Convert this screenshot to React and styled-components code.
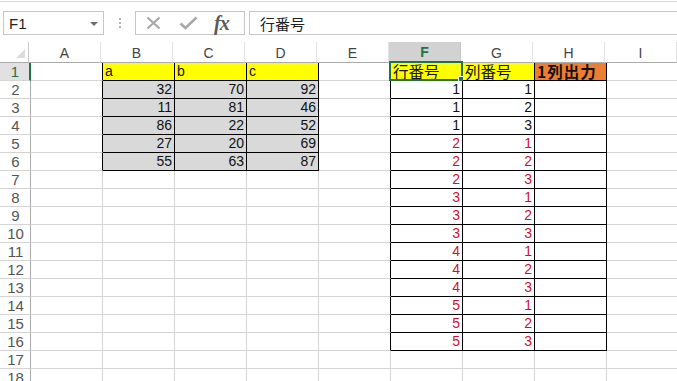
import React from 'react';
import styled, { createGlobalStyle } from 'styled-components';

const GlobalStyle = createGlobalStyle`
  html, body {
    margin: 0;
    padding: 0;
    background: #ffffff;
  }
  body {
    font-family: "Liberation Sans", "Noto Sans CJK JP", sans-serif;
  }
`;

const gridLine = '#d4d4d4';
const green = '#217346';

const Sheet = styled.div`
  width: 677px;
  height: 381px;
  overflow: hidden;
  background: #ffffff;
  display: flex;
  flex-direction: column;
`;

const TopLine = styled.div`
  height: 1px;
  margin-top: 1px;
  background: #d6d6d6;
  flex: none;
`;

const FormulaBar = styled.div`
  display: flex;
  align-items: stretch;
  height: 24px;
  margin: 9px 0 7px 3px;
  flex: none;
`;

const NameBox = styled.div`
  box-sizing: border-box;
  width: 101px;
  border: 1px solid #c6c6c6;
  display: flex;
  align-items: center;
  justify-content: space-between;
  padding: 0 5px 0 5px;
  font-size: 15px;
  color: #222;
`;

const DropArrow = styled.span`
  width: 0;
  height: 0;
  border-left: 4px solid transparent;
  border-right: 4px solid transparent;
  border-top: 4px solid #6d6d6d;
  margin-top: 1px;
`;

const Dots = styled.div`
  width: 31px;
  display: flex;
  flex-direction: column;
  align-items: center;
  justify-content: center;
  gap: 2px;
  span {
    width: 2px;
    height: 2px;
    background: #b4b4b4;
  }
`;

const FxBox = styled.div`
  box-sizing: border-box;
  width: 110px;
  border: 1px solid #c6c6c6;
  display: flex;
  align-items: center;
  padding-left: 10px;
  gap: 18px;
`;

const Fx = styled.span`
  font-family: "Liberation Serif", serif;
  font-style: italic;
  font-weight: bold;
  font-size: 20px;
  color: #5a5a5a;
  margin-left: -2px;
  letter-spacing: -1px;
`;

const FormulaInput = styled.div`
  box-sizing: border-box;
  flex: 1;
  margin-left: 4px;
  margin-right: -4px;
  border: 1px solid #c6c6c6;
  display: flex;
  align-items: center;
  padding-left: 10px;
  font-family: "Noto Sans CJK JP", sans-serif;
  font-size: 15px;
  color: #222;
`;

const Grid = styled.div`
  display: flex;
  flex-direction: column;
`;

const Row = styled.div`
  display: flex;
  height: ${(p) => p.$h}px;
  flex: none;
`;

const Corner = styled.div`
  box-sizing: border-box;
  width: 31px;
  height: 100%;
  border-right: 1px solid #c8c8c8;
  border-bottom: 1px solid #ababab;
  position: relative;
  &::after {
    content: '';
    position: absolute;
    right: 3px;
    bottom: 4px;
    width: 0;
    height: 0;
    border-left: 9px solid transparent;
    border-bottom: 9px solid #dcdcdc;
  }
`;

const ColHead = styled.div`
  box-sizing: border-box;
  width: 72px;
  flex: none;
  height: 100%;
  border-right: 1px solid ${(p) => (p.$active ? '#c6c6c6' : '#e2e2e2')};
  border-bottom: ${(p) => (p.$active ? `2px solid ${green}` : '1px solid #ababab')};
  background: ${(p) => (p.$active ? '#d2d2d2' : '#ffffff')};
  color: ${(p) => (p.$active ? green : '#444')};
  font-weight: ${(p) => (p.$active ? 'bold' : 'normal')};
  font-size: 14px;
  display: flex;
  align-items: center;
  justify-content: center;
  padding-top: 1px;
`;

const RowHead = styled.div`
  box-sizing: border-box;
  width: 31px;
  flex: none;
  height: 100%;
  border-right: ${(p) => (p.$active ? `2px solid ${green}` : '1px solid #ababab')};
  border-bottom: 1px solid ${gridLine};
  background: ${(p) => (p.$active ? '#e1e1e1' : '#ffffff')};
  color: ${(p) => (p.$active ? green : '#555')};
  font-size: 15px;
  display: flex;
  align-items: center;
  justify-content: center;
  padding-left: 1px;
`;

const Cell = styled.div`
  box-sizing: border-box;
  width: 72px;
  flex: none;
  height: 100%;
  position: relative;
  border-right: 1px solid ${(p) => (p.$bR ? '#000' : gridLine)};
  border-bottom: 1px solid ${(p) => (p.$bB ? '#000' : gridLine)};
  background: ${(p) => p.$fill || '#ffffff'};
  color: ${(p) => (p.$red ? '#cf1030' : '#111')};
  font-family: ${(p) =>
    p.$jp ? '"Noto Sans CJK JP", sans-serif' : '"Liberation Sans", sans-serif'};
  font-size: ${(p) => (p.$jp ? '15.5px' : '14px')};
  font-weight: ${(p) => (p.$bold ? 'bold' : 'normal')};
  letter-spacing: ${(p) => (p.$bold ? '1px' : '0')};
  line-height: 17px;
  display: flex;
  align-items: flex-end;
  justify-content: ${(p) => (p.$right ? 'flex-end' : 'flex-start')};
  padding: 0 2px 0 2px;
  white-space: nowrap;
  overflow: visible;
`;

const Selection = styled.div`
  position: absolute;
  left: -2px;
  top: -2px;
  right: -1px;
  bottom: -1px;
  border: 2px solid ${green};
  pointer-events: none;
  &::after {
    content: '';
    position: absolute;
    right: -4px;
    bottom: -4px;
    width: 5px;
    height: 5px;
    background: ${green};
    border: 1px solid #ffffff;
  }
`;

const COLS = ['A', 'B', 'C', 'D', 'E', 'F', 'G', 'H', 'I'];

const leftData = [
  ['a', 'b', 'c'],
  [32, 70, 92],
  [11, 81, 46],
  [86, 22, 52],
  [27, 20, 69],
  [55, 63, 87],
];

const cellFor = (r, c) => {
  // r: 1-based row, c: column letter
  const props = {};
  let text = '';
  const left = ['B', 'C', 'D'];
  const right = ['F', 'G', 'H'];

  if (r <= 6) {
    if (c === 'A') props.$bR = true;
    const li = left.indexOf(c);
    if (li >= 0) {
      props.$bR = true;
      props.$bB = true;
      props.$fill = r === 1 ? '#ffff00' : '#d9d9d9';
      text = leftData[r - 1][li];
      props.$right = r !== 1;
    }
  }

  if (r <= 16) {
    if (c === 'E') props.$bR = true;
    const ri = right.indexOf(c);
    if (ri >= 0) {
      props.$bR = true;
      props.$bB = true;
      if (r === 1) {
        props.$jp = true;
        if (c === 'H') {
          props.$fill = '#ed7d31';
          props.$bold = true;
          text = '1列出力';
        } else {
          props.$fill = '#ffff00';
          text = c === 'F' ? '行番号' : '列番号';
        }
      } else if (c !== 'H') {
        const i = r - 2;
        const rowNo = Math.floor(i / 3) + 1;
        const colNo = (i % 3) + 1;
        text = c === 'F' ? rowNo : colNo;
        props.$right = true;
        props.$red = rowNo >= 2;
      }
    }
  }
  return { props, text };
};

const ROWS = Array.from({ length: 18 }, (_, i) => i + 1);

const App = () => (
  <Sheet>
    <GlobalStyle />
    <TopLine />
    <FormulaBar>
      <NameBox>
        F1
        <DropArrow />
      </NameBox>
      <Dots>
        <span />
        <span />
        <span />
      </Dots>
      <FxBox>
        <svg width="15" height="14" viewBox="0 0 15 14">
          <path d="M1.5 1.5 L13.5 12.5 M13.5 1.5 L1.5 12.5" stroke="#a8a8a8" strokeWidth="2.2" fill="none" />
        </svg>
        <svg width="19" height="14" viewBox="0 0 19 14">
          <path d="M1.5 7.5 L6.5 12 L17.5 1.5" stroke="#a8a8a8" strokeWidth="2.6" fill="none" />
        </svg>
        <Fx>fx</Fx>
      </FxBox>
      <FormulaInput>行番号</FormulaInput>
    </FormulaBar>
    <Grid>
      <Row $h={21}>
        <Corner />
        {COLS.map((c) => (
          <ColHead key={c} $active={c === 'F'}>
            {c}
          </ColHead>
        ))}
      </Row>
      {ROWS.map((r) => (
        <Row key={r} $h={18}>
          <RowHead $active={r === 1}>{r}</RowHead>
          {COLS.map((c) => {
            const { props, text } = cellFor(r, c);
            return (
              <Cell key={c} {...props}>
                {text}
                {r === 1 && c === 'F' && <Selection />}
              </Cell>
            );
          })}
        </Row>
      ))}
    </Grid>
  </Sheet>
);

export default App;
